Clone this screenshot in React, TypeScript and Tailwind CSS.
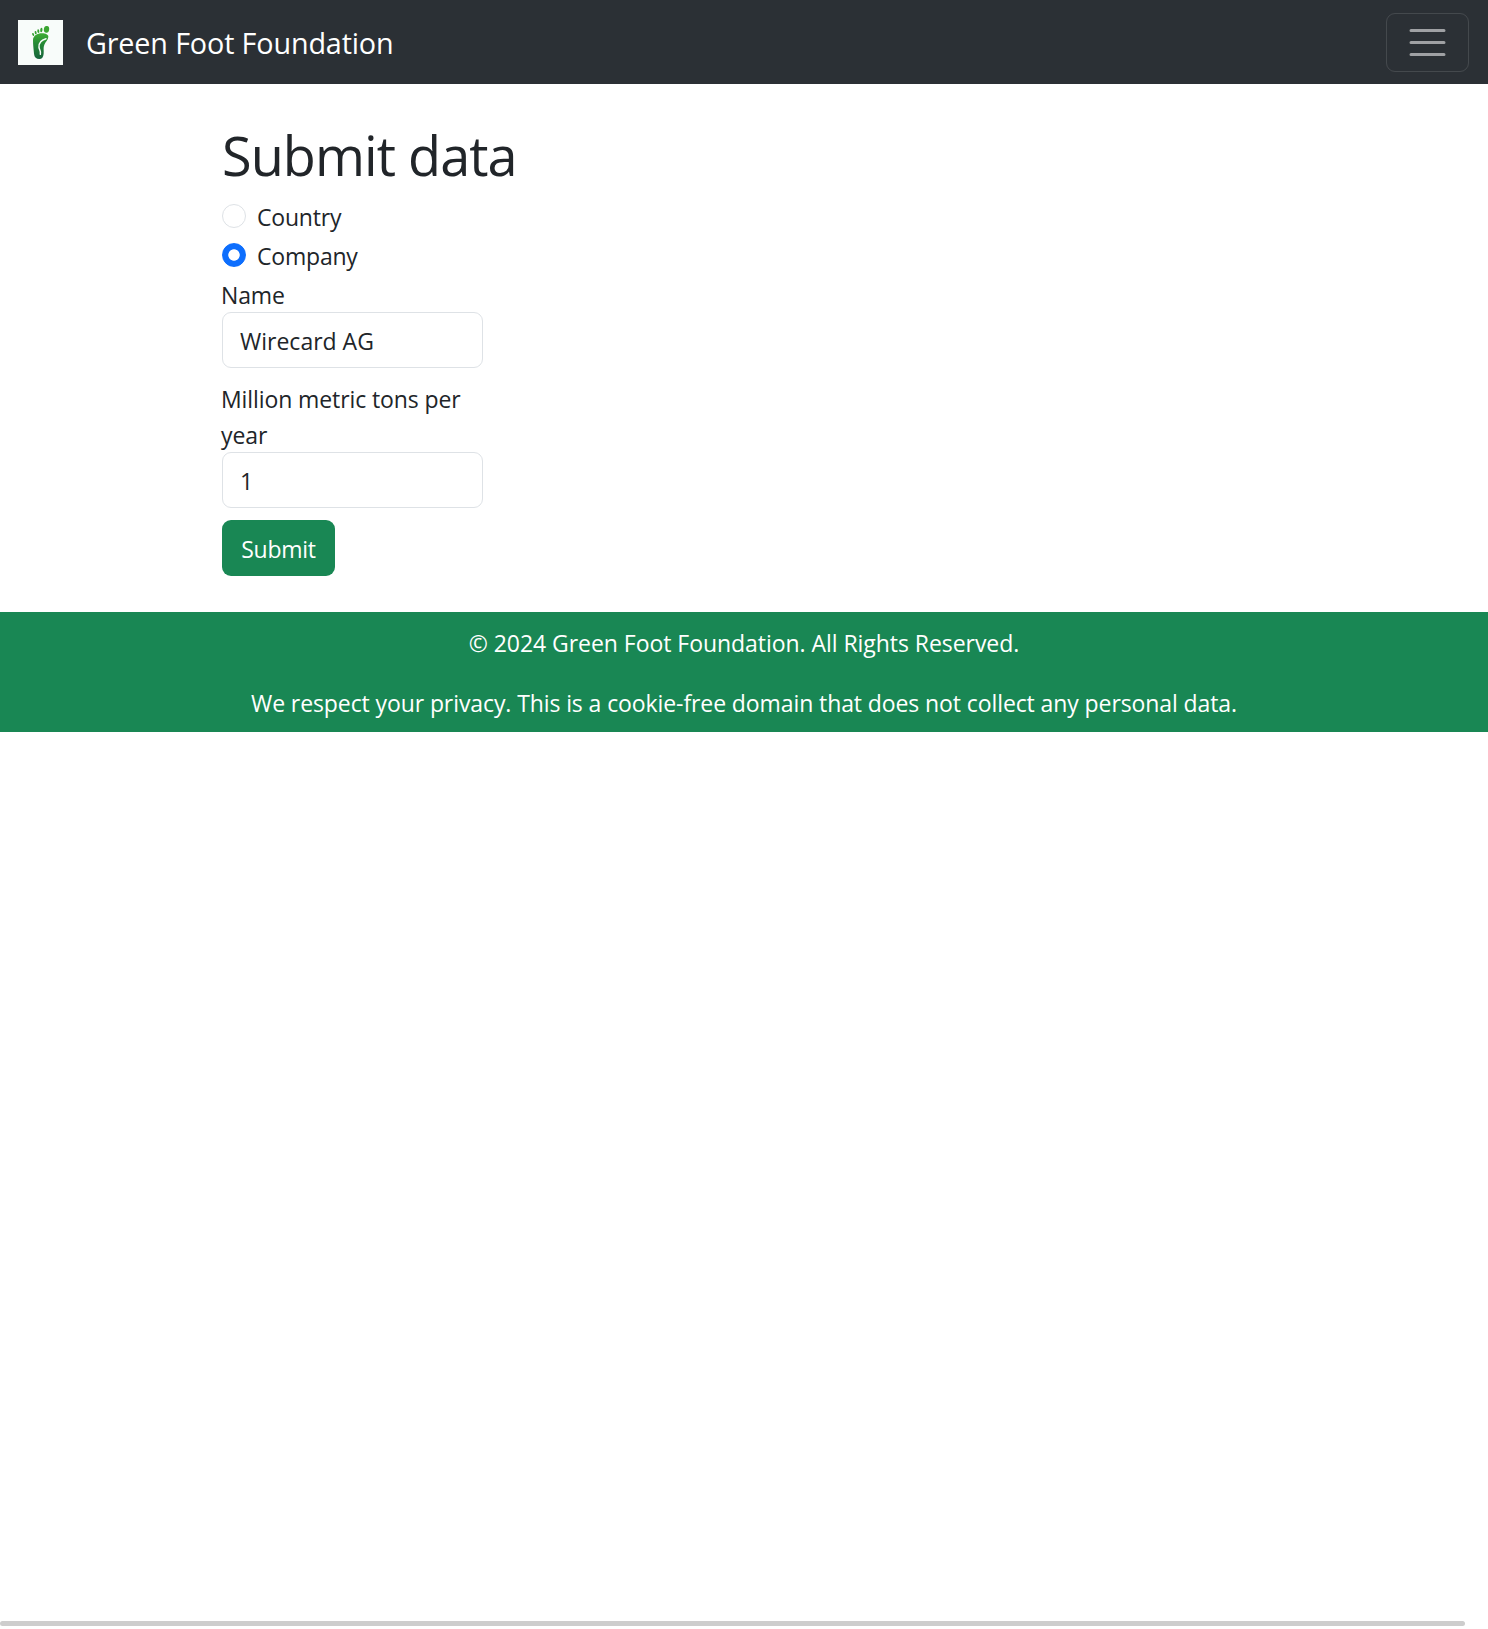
import React, { useState } from 'react';

function FootLogo() {
  return (
    <svg className="h-[45px] w-[45px] shrink-0" viewBox="54 60 135 135" aria-hidden="true">
      <defs>
        <linearGradient id="foot" x1="0" y1="0" x2="0" y2="1">
          <stop offset="0" stopColor="#3fae35" />
          <stop offset="0.4" stopColor="#258a35" />
          <stop offset="1" stopColor="#17643c" />
        </linearGradient>
      </defs>
      <rect x="54" y="60" width="135" height="135" fill="#f8fcfa" />
      <path
        d="M99 121C99 107 112 100 126 100C137 100 145 104 145 110C145 118 137 125 133 134C129 143 132 150 131 161C130 171 126 177 118 177C109 177 103 172 102 161C101 147 99 135 99 121Z"
        fill="url(#foot)"
      />
      <path d="M138 116C123 120 116 131 117 142C118 150 124 154 121 163" fill="none" stroke="#f8fcfa" strokeWidth="4.500" strokeLinecap="round" />
      <ellipse cx="139.500" cy="88" rx="8" ry="10" fill="#3aa531" transform="rotate(8 139.500 88)" />
      <ellipse cx="124" cy="90" rx="3.400" ry="6.500" fill="#35a030" transform="rotate(8 124 90)" />
      <ellipse cx="115" cy="93.500" rx="3" ry="5.500" fill="#35a030" transform="rotate(-8 115 93.500)" />
      <ellipse cx="107" cy="98" rx="2.800" ry="5" fill="#35a030" transform="rotate(-14 107 98)" />
      <ellipse cx="99.500" cy="103.500" rx="2.800" ry="4.500" fill="#35a030" transform="rotate(-22 99.500 103.500)" />
    </svg>
  );
}

function Radio({ label, checked, onSelect }: { label: string; checked: boolean; onSelect: () => void }) {
  return (
    <label className="mb-[3px] flex h-9 items-start gap-[11px]">
      <input
        type="radio"
        name="kind"
        checked={checked}
        onChange={onSelect}
        className="mt-1.5 h-6 w-6 shrink-0 appearance-none rounded-full border border-[#dee2e6] bg-white checked:border-[#0d6efd] checked:bg-[radial-gradient(circle,#ffffff_5.3px,#0d6efd_6.1px)]"
      />
      <span className="leading-[38px] tracking-[-0.2px]">{label}</span>
    </label>
  );
}

const field =
  'block h-14 w-[261px] rounded-[9px] border border-[#dee2e6] bg-white pr-[18px] pl-[17px] pt-[2px] text-[23px] text-[#212529] outline-none';

export default function App() {
  const [kind, setKind] = useState('company');
  const [name, setName] = useState('Wirecard AG');
  const [tons, setTons] = useState('1');

  return (
    <div className="flex h-screen flex-col overflow-hidden bg-white font-['Open_Sans',sans-serif] text-[23px] leading-9 text-[#212529]">
      <nav className="flex h-[84px] shrink-0 items-center justify-between bg-[#2b3035] pr-[19px] pl-[18px]">
        <a className="flex items-center gap-[23px] pt-px">
          <FootLogo />
          <span className="pt-px text-[28.75px] leading-[44px] tracking-[-0.147px] whitespace-nowrap text-white">Green Foot Foundation</span>
        </a>
        <button
          type="button"
          aria-label="Toggle navigation"
          className="flex h-[59px] w-[83px] items-center justify-center rounded-[9px] border border-white/12"
        >
          <svg className="h-[45px] w-[45px]" viewBox="0 0 30 30" aria-hidden="true">
            <path stroke="rgba(255,255,255,0.55)" strokeLinecap="round" strokeMiterlimit="10" strokeWidth="2" d="M4 7h22M4 15h22M4 23h22" />
          </svg>
        </button>
      </nav>

      <main className="flex flex-col items-start pt-[37px] pb-9 pl-[222px]">
        <h1 className="mb-2.5 h-[67px] text-[54px] leading-[68px] tracking-[-0.94px]">Submit data</h1>
        <Radio label="Country" checked={kind === 'country'} onSelect={() => setKind('country')} />
        <Radio label="Company" checked={kind === 'company'} onSelect={() => setKind('company')} />
        <label htmlFor="name" className="-ml-px h-9 leading-[38px] tracking-[-0.13px]">Name</label>
        <input id="name" className={field} value={name} onChange={(e) => setName(e.target.value)} />
        <label htmlFor="tons" className="-ml-px mt-3 h-[72px] w-[261px] pt-px tracking-[-0.1px]">
          Million metric tons per year
        </label>
        <input id="tons" className={field} value={tons} onChange={(e) => setTons(e.target.value)} />
        <button
          type="button"
          className="mt-3 flex h-14 w-[113px] items-center justify-center rounded-[9px] bg-[#198754] pt-[2px] tracking-[-0.27px] text-white"
        >
          Submit
        </button>
      </main>

      <footer className="flex h-[120px] shrink-0 flex-col items-center gap-6 bg-[#198754] pt-[13px] text-white">
        <p className="tracking-[-0.049px]">© 2024 Green Foot Foundation. All Rights Reserved.</p>
        <p className="tracking-[-0.097px]">We respect your privacy. This is a cookie-free domain that does not collect any personal data.</p>
      </footer>

      <div className="mt-auto mb-[3px] h-[5px] w-[1465px] shrink-0 rounded-full bg-[#cdcdcd]" />
    </div>
  );
}
